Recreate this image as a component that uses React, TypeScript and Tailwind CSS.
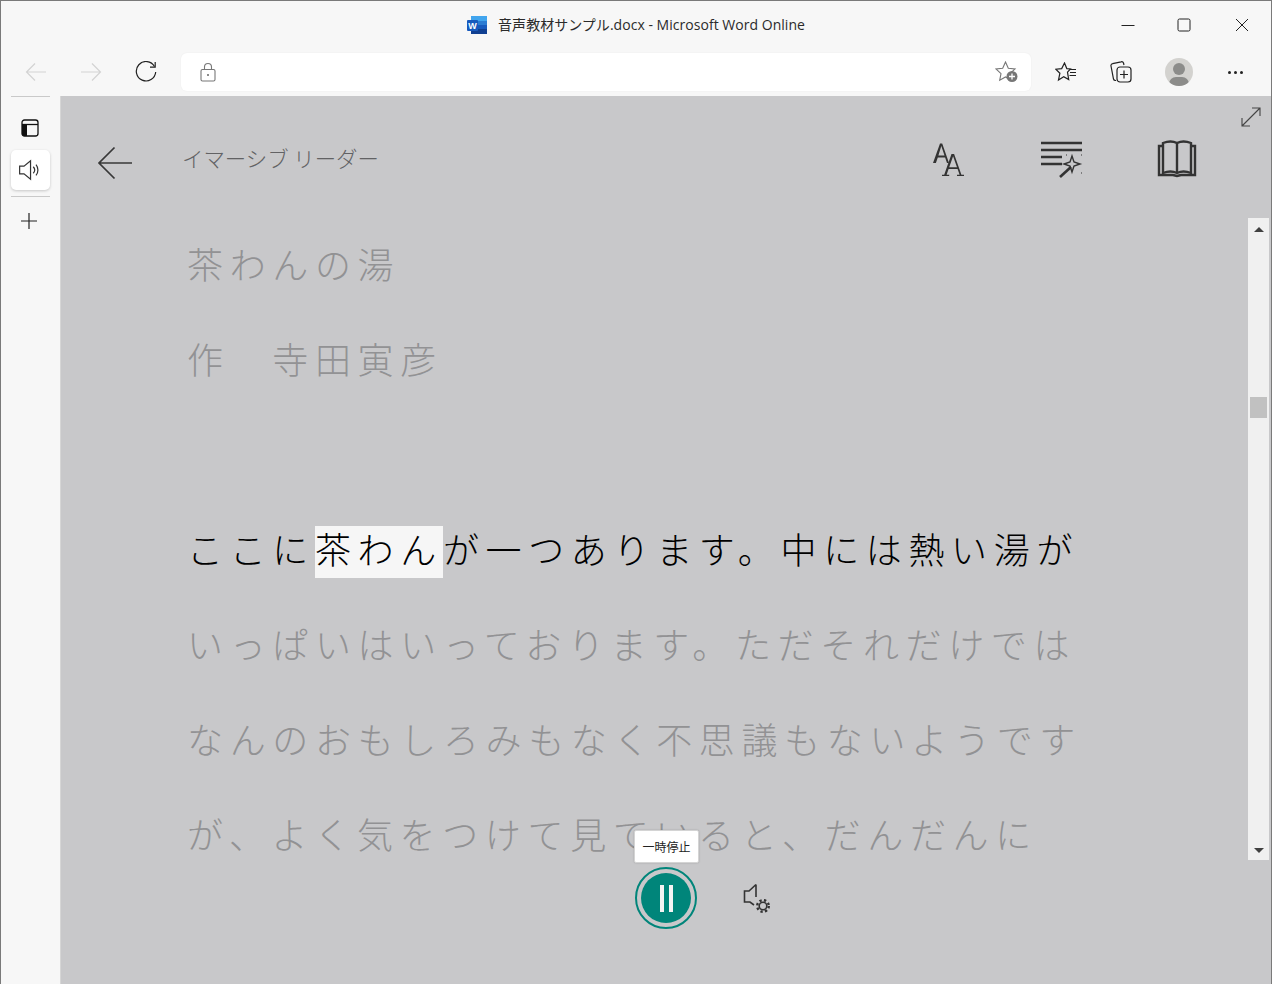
import React from "react";

const jp = "font-['Noto_Sans_CJK_JP',sans-serif]";

function Line({ children, active }: { children: React.ReactNode; active?: boolean }) {
  return (
    <div className={`h-[95px] flex items-center text-[36px] leading-[52px] tracking-[6.65px] whitespace-nowrap font-light ${active ? "text-black" : "text-[#929294]"}`}>
      {children}
    </div>
  );
}

export default function App() {
  return (
    <div className={`w-[1272px] h-[984px] flex flex-col overflow-hidden bg-[#f7f7f7] border-t border-l border-r border-[#7a7a7a] ${jp}`}>
      {/* title bar */}
      <div className="h-[47px] shrink-0 flex items-center">
        <div className="w-[169px] shrink-0" />
        <div className="flex-1 flex justify-center items-center gap-[11px] text-[14px] text-[#2b2b2b] font-['Open_Sans','Noto_Sans_CJK_JP',sans-serif]">
          <svg width="20" height="18" viewBox="0 0 20 18">
            <rect x="4" y="0" width="16" height="18" rx="1" fill="#2b7cd3" />
            <rect x="4" y="0" width="16" height="5" fill="#41a5ee" />
            <rect x="4" y="9" width="16" height="5" fill="#185abd" />
            <rect x="4" y="13" width="16" height="5" fill="#103f91" />
            <rect x="0" y="4" width="11" height="11" rx="1" fill="#185abd" />
            <text x="5.5" y="12.5" fontSize="9" fontWeight="700" fill="#fff" textAnchor="middle" fontFamily="Liberation Sans">W</text>
          </svg>
          <span className="tracking-[0.03px]">音声教材サンプル.docx - Microsoft Word Online</span>
        </div>
        <div className="flex items-center w-[169px] shrink-0">
          <div className="w-[52px] flex justify-center">
            <svg width="14" height="14" viewBox="0 0 14 14"><path d="M0.5 7.5h13" stroke="#222" strokeWidth="1" /></svg>
          </div>
          <div className="w-[60px] flex justify-center">
            <svg width="14" height="14" viewBox="0 0 14 14"><rect x="1" y="1" width="12" height="12" rx="1.5" fill="none" stroke="#222" strokeWidth="1" /></svg>
          </div>
          <div className="w-[56px] flex justify-center">
            <svg width="14" height="14" viewBox="0 0 14 14"><path d="M1 1l12 12M13 1L1 13" stroke="#222" strokeWidth="1" /></svg>
          </div>
        </div>
      </div>

      {/* toolbar */}
      <div className="h-[48px] shrink-0 flex items-center">
        <div className="w-[54px] flex justify-center pl-[16px]">
          <svg width="22" height="20" viewBox="0 0 22 20"><path d="M21 10H1.5M10 1.5L1.5 10l8.5 8.5" fill="none" stroke="#d3d3d3" strokeWidth="1.2" /></svg>
        </div>
        <div className="w-[56px] flex justify-center pl-[16px]">
          <svg width="22" height="20" viewBox="0 0 22 20"><path d="M1 10h19.5M12 1.5l8.5 8.5-8.5 8.5" fill="none" stroke="#d3d3d3" strokeWidth="1.2" /></svg>
        </div>
        <div className="w-[70px] flex justify-center">
          <svg width="22" height="22" viewBox="0 0 22 22">
            <path d="M19.5 5.5A9.7 9.7 0 1 0 20.7 11" fill="none" stroke="#222" strokeWidth="1.2" />
            <path d="M20.2 1v5.2H15" fill="none" stroke="#222" strokeWidth="1.2" />
          </svg>
        </div>
        <div className="w-[850px] h-[38px] bg-white rounded-[6px] flex items-center justify-between pl-[19px] pr-[12px] shadow-[0_0_2px_rgba(0,0,0,0.06)]">
          <svg width="16" height="20" viewBox="0 0 16 20">
            <path d="M4.5 8V5a3.5 3.5 0 0 1 7 0v3" fill="none" stroke="#777" strokeWidth="1.1" />
            <rect x="1" y="7.5" width="14" height="11.5" rx="1.5" fill="none" stroke="#777" strokeWidth="1.1" />
            <circle cx="8" cy="13" r="1" fill="#666" />
          </svg>
          <svg width="24" height="22" viewBox="0 0 24 22">
            <path d="M10.5 1l2.8 6.3 6.7.7-5 4.6 1.3 6.6-5.8-3.3-5.8 3.3 1.3-6.6-5-4.6 6.7-.7z" fill="none" stroke="#777" strokeWidth="1.1" />
            <circle cx="17" cy="15.5" r="5.5" fill="#777" />
            <path d="M17 12.5v6M14 15.5h6" stroke="#fff" strokeWidth="1.3" />
          </svg>
        </div>
        <div className="flex-1 flex items-center pl-[24px]">
          <div className="w-[22px] flex justify-center">
            <svg width="22" height="20" viewBox="0 0 22 20">
              <path d="M9.5 1l2.3 5.6 3.7.4-3 3.2 1.2 7.4-5-2.9-5.2 3.3 1.4-6.8L.8 7.2l5.9-.6z" fill="none" stroke="#222" strokeWidth="1.2" />
              <path d="M15 7.5h6M15 10.5h6M14.5 13.5h6.5" stroke="#222" strokeWidth="1.1" />
            </svg>
          </div>
          <div className="w-[22px] ml-[33px] flex justify-center">
            <svg width="22" height="22" viewBox="0 0 22 22">
              <path d="M6 20.5H5.5a2 2 0 0 1-2-1.5L1 6a2 2 0 0 1 1.6-2.4l8.5-1.8A2 2 0 0 1 13.5 3l.5 2" fill="none" stroke="#222" strokeWidth="1.2" transform="translate(0 -1)" />
              <rect x="7" y="6" width="14" height="15" rx="3" fill="none" stroke="#222" strokeWidth="1.2" />
              <path d="M14 9.5v8M10 13.5h8" stroke="#222" strokeWidth="1.2" />
            </svg>
          </div>
          <div className="ml-[33px] w-[28px] h-[28px] rounded-full bg-[#d3d2cf] relative overflow-hidden flex justify-center">
            <div className="w-[12px] h-[12px] rounded-full bg-[#8c8c8a] mt-[5px]" />
            <div className="absolute top-[19px] left-[4px] w-[20px] h-[14px] rounded-full bg-[#8c8c8a]" />
          </div>
          <div className="ml-[35px] flex gap-[3px]">
            <span className="w-[3px] h-[3px] rounded-full bg-[#222]" />
            <span className="w-[3px] h-[3px] rounded-full bg-[#222]" />
            <span className="w-[3px] h-[3px] rounded-full bg-[#222]" />
          </div>
        </div>
      </div>

      {/* body */}
      <div className="flex-1 flex min-h-0">
        {/* sidebar */}
        <div className="w-[60px] shrink-0 flex flex-col items-center border-r border-[#d6d6d6] pr-[1px]">
          <div className="w-[39px] h-px bg-[#c9c9c9]" />
          <div className="h-[53px] flex items-center justify-center pt-[8px]">
            <svg width="18" height="18" viewBox="0 0 18 18">
              <rect x="1" y="1" width="16" height="16" rx="2.5" fill="none" stroke="#111" strokeWidth="1.3" />
              <path d="M1 5.5h16" stroke="#111" strokeWidth="1.3" />
              <path d="M1 5.5h5V17H3a2 2 0 0 1-2-2z" fill="#111" />
            </svg>
          </div>
          <div className="w-[39px] h-[40px] bg-white rounded-[5px] shadow-[0_1px_3px_rgba(0,0,0,0.2)] flex items-center justify-center">
            <svg width="24" height="24" viewBox="0 0 22 22">
              <path d="M1.5 7.5h4L11.5 2.5v17l-6-5h-4z" fill="none" stroke="#333" strokeWidth="1.1" />
              <path d="M14 8a4.5 4.5 0 0 1 0 6M16.5 6a8 8 0 0 1 0 10" fill="none" stroke="#333" strokeWidth="1.1" />
            </svg>
          </div>
          <div className="w-[39px] h-px bg-[#c9c9c9] mt-[6px]" />
          <div className="h-[48px] flex items-center justify-center pr-[2px]">
            <svg width="18" height="18" viewBox="0 0 18 18"><path d="M9 1v16M1 9h16" stroke="#222" strokeWidth="1.2" /></svg>
          </div>
        </div>

        {/* reader */}
        <div className="flex-1 min-w-0 bg-[#c8c8ca] flex relative">
          <div className="absolute right-[10px] top-[11px]">
            <svg width="20" height="20" viewBox="0 0 20 20" fill="none" stroke="#444" strokeWidth="1.1">
              <path d="M1 19L19 1M11 1h8v8M1 11v8h8" />
            </svg>
          </div>
          <div className="flex-1 min-w-0 flex flex-col">
            {/* reader header */}
            <div className="h-[119px] shrink-0 flex items-start pt-[47px]">
              <div className="ml-[36px] mt-[3px]">
                <svg width="36" height="34" viewBox="0 0 36 34" fill="none" stroke="#383838" strokeWidth="1.7">
                  <path d="M35 17H2M17.5 1.5L2 17l15.5 15.5" />
                </svg>
              </div>
              <div className="ml-[49px] text-[21.4px] leading-[30px] text-[#626264] whitespace-nowrap font-light">イマーシブ リーダー</div>
              <div className="ml-auto flex items-start mr-[51px]">
                <svg width="36" height="36" viewBox="0 0 36 36" fill="#333" className="mt-[-1px]">
                  <path d="M2 21L9 1.5h2.2L18 21h-2l-1.9-5.6H6.8L4.9 21zM7.4 13.6h6.1L10.3 4z" />
                  <path d="M11 34v-1.3h2.2L20.5 12h2.6l7.3 20.7H33V34h-7v-1.3h2.6L26.6 27h-9l-2 5.7h2.6V34zM18.2 25.3h7.8l-3.9-11z" />
                </svg>
                <svg width="44" height="38" viewBox="0 0 44 38" fill="none" stroke="#333" className="ml-[73px] mt-[-2px]">
                  <path d="M1 2h41M1 9h41M1 16h21M1 23h21" strokeWidth="2.4" />
                  <path d="M20 36l11-10" strokeWidth="2.6" />
                  <path d="M32 15l2 6 6 2-6 2-2 6-2-6-6-2 6-2z" strokeWidth="1.4" />
                  <path d="M26 14h1M41 14h1M41 32h1" strokeWidth="1" />
                </svg>
                <svg width="40" height="38" viewBox="0 0 40 38" fill="none" stroke="#333" strokeWidth="2.4" className="ml-[73px] mt-[-3px]">
                  <path d="M6 3V33c5-2 10-2 14 0 4-2 9-2 14 0V3c-5-2-10-2-14 0-4-2-9-2-14 0z" />
                  <path d="M20 3v30" />
                  <path d="M6 6H2v29h14l4 1 4-1h14V6h-4" />
                </svg>
              </div>
            </div>
            {/* text */}
            <div className="pl-[126px]">
              <Line>茶わんの湯</Line>
              <Line>作　寺田寅彦</Line>
              <div className="h-[95px]" />
              <Line active>
                ここに<span className="bg-[#f6f6f6] h-[52px] mt-[8px] leading-[44px]">茶わん</span>が一つあります。中には熱い湯が
              </Line>
              <Line>いっぱいはいっております。ただそれだけでは</Line>
              <Line>なんのおもしろみもなく不思議もないようです</Line>
              <Line>が、よく気をつけて見ていると、だんだんに</Line>
            </div>
          </div>

          {/* scrollbar */}
          <div className="w-[21px] h-[642px] mt-[122px] mr-[2px] shrink-0 bg-[#f0f0f0] flex flex-col items-center pt-[9px] justify-between pb-[7px] relative">
            <div className="w-0 h-0 border-l-[5px] border-r-[5px] border-b-[5px] border-l-transparent border-r-transparent border-b-[#404040]" />
            <div className="absolute top-[179px] left-[2px] w-[17px] h-[21px] bg-[#c1c1c1]" />
            <div className="w-0 h-0 border-l-[5px] border-r-[5px] border-t-[5px] border-l-transparent border-r-transparent border-t-[#404040]" />
          </div>

          {/* playback controls */}
          <div className="absolute left-[573px] top-[734px] bg-white rounded-[2px] border border-[#d4d4d4] shadow-[0_0_2px_rgba(0,0,0,0.2)] w-[65px] h-[33px] flex items-center justify-center text-[12px] text-[#222]">一時停止</div>
          <div className="absolute left-[574px] top-[771px] w-[62px] h-[62px] rounded-full border-[2px] border-[#00857a] flex items-center justify-center">
            <div className="w-[50px] h-[50px] rounded-full bg-[#00857a] flex items-center justify-center gap-[5px]">
              <span className="w-[4px] h-[27px] bg-[#f4f4f4]" />
              <span className="w-[4px] h-[27px] bg-[#f4f4f4]" />
            </div>
          </div>
          <div className="absolute left-[682px] top-[787px]">
            <svg width="28" height="32" viewBox="0 0 28 32" fill="none" stroke="#333">
              <path d="M13 1.5L6 8H1.5v11H7l4 3M13 1.5V14" strokeWidth="1.6" />
              <circle cx="20" cy="23" r="3.8" strokeWidth="1.6" />
              <circle cx="20" cy="23" r="5.8" strokeWidth="2.4" strokeDasharray="2.3 2.3" />
            </svg>
          </div>
        </div>
      </div>
    </div>
  );
}
